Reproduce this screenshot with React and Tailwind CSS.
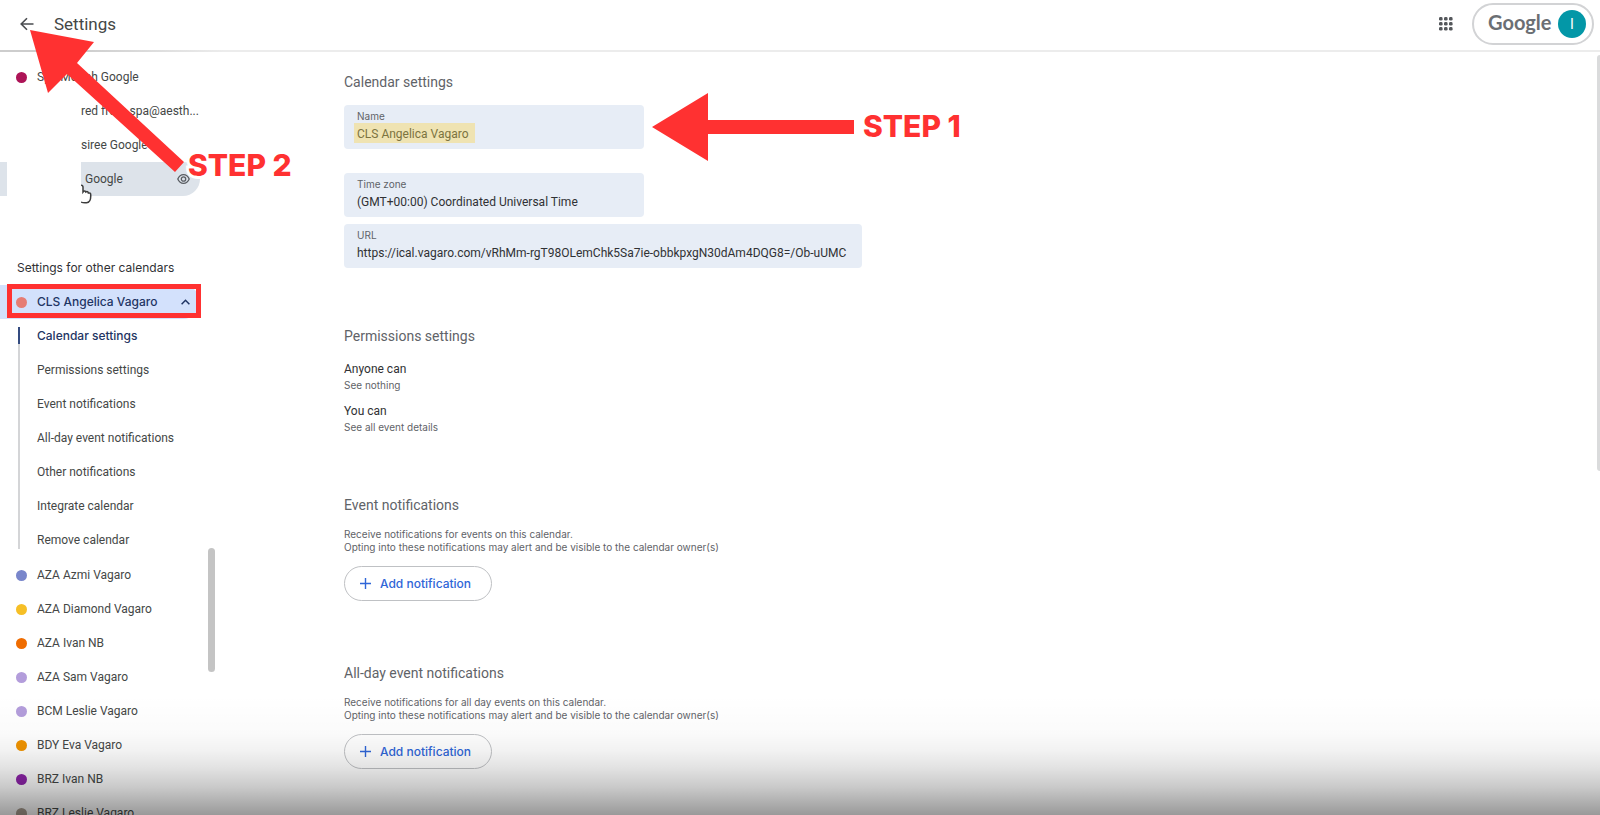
import React, { useState } from 'react';

const sharedCalendars = ['red from spa@aesth...', 'siree Google'];

const sections = [
    'Calendar settings',
    'Permissions settings',
    'Event notifications',
    'All-day event notifications',
    'Other notifications',
    'Integrate calendar',
    'Remove calendar',
];

const calendars = [
    { name: 'AZA Azmi Vagaro', dot: 'bg-[#7986cb]' },
    { name: 'AZA Diamond Vagaro', dot: 'bg-[#f6bf26]' },
    { name: 'AZA Ivan NB', dot: 'bg-[#ef6c00]' },
    { name: 'AZA Sam Vagaro', dot: 'bg-[#b39ddb]' },
    { name: 'BCM Leslie Vagaro', dot: 'bg-[#b39ddb]' },
    { name: 'BDY Eva Vagaro', dot: 'bg-[#f09300]' },
    { name: 'BRZ Ivan NB', dot: 'bg-[#8e24aa]' },
    { name: 'BRZ Leslie Vagaro', dot: 'bg-[#a79b8e]' },
];

const permissions = [
    { who: 'Anyone can', what: 'See nothing' },
    { who: 'You can', what: 'See all event details' },
];

function Header() {
    return (
        <header className="relative flex h-[52px] shrink-0 items-center justify-between pb-[5px] pl-5 pr-[6px]">
            <div className="flex items-center gap-5">
                <button type="button" aria-label="Back">
                    <svg width="14" height="14" viewBox="0 0 14 14" fill="none" stroke="#4a4c50" strokeWidth="1.6">
                        <path d="M13.5 7H1.5M7 1.2L1.2 7L7 12.8" />
                    </svg>
                </button>
                <h1 className="pt-[2px] text-[17px] text-[#444746]">Settings</h1>
            </div>
            <div className="flex items-center gap-[18px]">
                <button type="button" aria-label="Google apps">
                    <svg width="16" height="16" viewBox="0 0 16 16" fill="#54575b">
                        {[1, 6, 11].map(y => [1, 6, 11].map(x => (
                            <rect key={`${x}-${y}`} x={x} y={y} width="3.6" height="3.6" rx="1.4" />
                        )))}
                    </svg>
                </button>
                <button type="button" className="flex h-[42px] w-[122px] items-center justify-between rounded-full border-2 border-[#d2d3d5] pl-[14px] pr-[6px]">
                    <span className="pb-1 font-[Lato] text-[20px] leading-6 font-bold text-[#6b6f74]">Google</span>
                    <span className="flex h-7 w-7 items-center justify-center rounded-full bg-[#0397a7] text-sm text-white">I</span>
                </button>
            </div>
            <div className="absolute inset-x-0 bottom-0 h-[2px] bg-linear-to-r from-[#cdcdcd] from-5% via-[#ececec] via-14% to-[#ececec]" />
        </header>
    );
}

function Dot({ color }) {
    return <span className={`h-[11px] w-[11px] shrink-0 rounded-full ${color}`} />;
}

function Sidebar({ section, onSection }) {
    return (
        <nav className="relative w-[216px] shrink-0 pt-2 text-xs text-[#444746]">
            <a href="#spa" className="flex h-[34px] items-center gap-[10px] pl-4">
                <Dot color="bg-[#ad1457]" />
                Spa Moriah Google
            </a>
            {sharedCalendars.map(name => (
                <a key={name} href="#shared" className="flex h-[34px] items-center pl-[81px] whitespace-nowrap">{name}</a>
            ))}
            <a href="#google" className="flex h-[34px]">
                <span className="w-[7px] bg-[#dde3ea]" />
                <span className="relative ml-[74px] flex w-[119px] items-center justify-between rounded-r-full bg-[#dde3ea] pr-[10px] pl-1">
                    Google
                    <svg width="13" height="12" viewBox="0 0 13 12" fill="none" stroke="#5a5e63" strokeWidth="1.3">
                        <path d="M.8 6C2 3.200 4 1.700 6.500 1.700S11 3.200 12.200 6C11 8.800 9 10.300 6.500 10.300S2 8.800.8 6Z" />
                        <circle cx="6.500" cy="6" r="2.200" />
                    </svg>
                    <svg className="absolute top-[22px] left-0" width="11" height="20" viewBox="0 0 11 20" fill="#fff" stroke="#3c3c3c" strokeWidth="1.500">
                        <path d="M0 1.500C1.300 1 2 2 2 3.200V8C3 6.600 4.600 6.800 4.800 8C6 7.200 7.300 7.800 7.400 9C8.800 8.600 9.700 9.400 9.700 10.600C9.900 14 9.300 18.400 5.500 18.800C3 19 1.200 18.800 0 18" />
                    </svg>
                </span>
            </a>

            <h2 className="mt-[55px] flex h-[34px] items-center pl-[17px] font-[Inter] text-[#303134]">Settings for other calendars</h2>
            <a href="#cls" className="relative flex h-[34px] w-[200px] items-center gap-[10px] rounded-r-full bg-[#d3e1fc] pr-[10px] pl-4 font-[Inter] font-medium text-[#1f3564]">
                <Dot color="bg-[#e67c73]" />
                <span className="flex-1 whitespace-nowrap">CLS Angelica Vagaro</span>
                <svg width="9" height="6" viewBox="0 0 9 6" fill="none" stroke="#1f3564" strokeWidth="1.500">
                    <path d="M.6 5.300L4.500 1.300L8.400 5.300" />
                </svg>
                <span className="absolute -top-px -right-px left-[7px] h-[34px] border-[5px] border-[#ff3131]" />
            </a>
            <div className="flex">
                <div className="my-2 ml-[18px] w-[2px] bg-[#d4d5d7]">
                    <div className="h-[17px] bg-[#344b80]" />
                </div>
                <ul className="pl-[17px]">
                    {sections.map(name => (
                        <li key={name}>
                            <button
                                type="button"
                                onClick={() => onSection(name)}
                                className={`flex h-[34px] items-center whitespace-nowrap ${name === section ? 'font-[Inter] font-medium text-[#1f3564]' : ''}`}
                            >
                                {name}
                            </button>
                        </li>
                    ))}
                </ul>
            </div>
            <div className="pt-px">
                {calendars.map(({ name, dot }) => (
                    <a key={name} href="#calendar" className="flex h-[34px] items-center gap-[10px] pl-4">
                        <Dot color={dot} />
                        {name}
                    </a>
                ))}
            </div>
            <div className="absolute top-[496px] right-px h-[124px] w-[7px] rounded-full bg-[#c4c4c4]" />
        </nav>
    );
}

function Field({ id, label, value, width, highlight }) {
    return (
        <div className={`flex h-[44px] flex-col rounded bg-[#e7edf6] px-[13px] pt-1 ${width}`}>
            <label htmlFor={id} className="font-[Inter] text-[10px] leading-[14px] text-[#5f6368]">{label}</label>
            <input
                id={id}
                readOnly
                defaultValue={value}
                className={`h-5 pt-[2px] text-xs outline-none ${highlight ? '-ml-[3px] w-[121px] bg-[#efe3b2] px-[3px] text-[#7c7340]' : 'w-full text-[#303134]'}`}
            />
        </div>
    );
}

function Notifications({ title, text }) {
    return (
        <section>
            <h2 className="text-sm leading-5 text-[#5f6368]">{title}</h2>
            <p className="mt-[13px] font-[Inter] text-[10px] leading-[13px] text-[#5f6368]">
                {text}
                <br />
                Opting into these notifications may alert and be visible to the calendar owner(s)
            </p>
            <button type="button" className="mt-3 flex h-[35px] w-[148px] items-center gap-[9px] rounded-full border border-[#bfc1c4] pl-[15px] font-[Inter] text-xs font-medium text-[#2f66d8]">
                <svg width="11" height="11" viewBox="0 0 11 11" stroke="currentColor" strokeWidth="1.400">
                    <path d="M5.500 0V11M0 5.500H11" />
                </svg>
                Add notification
            </button>
        </section>
    );
}

function App() {
    const [section, setSection] = useState('Calendar settings');

    return (
        <div className="relative flex h-screen flex-col overflow-hidden bg-white font-[Roboto,sans-serif]">
            <Header />
            <div className="flex min-h-0 flex-1">
                <Sidebar section={section} onSection={setSection} />
                <main className="flex-1 pt-5 pl-[128px]">
                    <section>
                        <h2 className="text-sm leading-5 text-[#5f6368]">Calendar settings</h2>
                        <div className="mt-[13px] flex h-[44px] items-center">
                            <Field id="name" label="Name" value="CLS Angelica Vagaro" width="w-[300px]" highlight />
                            <svg className="ml-2 shrink-0" width="202" height="68" viewBox="0 0 202 68" fill="#ff3131">
                                <path d="M0 34L56 0V27H202V41H56V68Z" />
                            </svg>
                            <strong className="ml-[9px] pb-[2px] font-[Inter] text-[30px] font-extrabold whitespace-nowrap text-[#ff3131]">STEP 1</strong>
                        </div>
                        <div className="mt-6 flex flex-col gap-[7px]">
                            <Field id="zone" label="Time zone" value="(GMT+00:00) Coordinated Universal Time" width="w-[300px]" />
                            <Field id="url" label="URL" value="https://ical.vagaro.com/vRhMm-rgT98OLemChk5Sa7ie-obbkpxgN30dAm4DQG8=/Ob-uUMC" width="w-[518px]" />
                        </div>
                    </section>

                    <section className="mt-[58px]">
                        <h2 className="text-sm leading-5 text-[#5f6368]">Permissions settings</h2>
                        <dl className="mt-[14px] flex flex-col gap-[10px]">
                            {permissions.map(({ who, what }) => (
                                <div key={who}>
                                    <dt className="text-xs leading-[18px] text-[#303134]">{who}</dt>
                                    <dd className="font-[Inter] text-[10px] leading-[14px] text-[#5f6368]">{what}</dd>
                                </div>
                            ))}
                        </dl>
                    </section>

                    <div className="mt-[61px] flex flex-col gap-[62px]">
                        <Notifications title="Event notifications" text="Receive notifications for events on this calendar." />
                        <Notifications title="All-day event notifications" text="Receive notifications for all day events on this calendar." />
                    </div>
                </main>
                <div className="mt-[3px] h-[416px] w-[3px] rounded-l bg-[#dadbdc]" />
            </div>

            {/* step 2 callout over the sidebar */}
            <div className="pointer-events-none absolute top-[30px] left-[30px] flex items-end">
                <svg width="154" height="142" viewBox="0 0 154 142" fill="#ff3131">
                    <path d="M0 0L64 12L47 33L154 132L145 142L37 44L18 63Z" />
                </svg>
                <strong className="-mb-[13px] ml-1 font-[Inter] text-[30px] leading-[40px] font-extrabold whitespace-nowrap text-[#ff3131] [paint-order:stroke_fill] [-webkit-text-stroke:6px_white]">STEP 2</strong>
            </div>

            {/* player shade along the bottom edge */}
            <div className="pointer-events-none absolute inset-x-0 bottom-0 h-[120px] bg-[linear-gradient(to_bottom,rgba(0,0,0,0)_0%,rgba(0,0,0,0.02)_32%,rgba(0,0,0,0.05)_46%,rgba(0,0,0,0.11)_60%,rgba(0,0,0,0.21)_77%,rgba(0,0,0,0.4)_100%)]" />
        </div>
    );
}

export default App;
